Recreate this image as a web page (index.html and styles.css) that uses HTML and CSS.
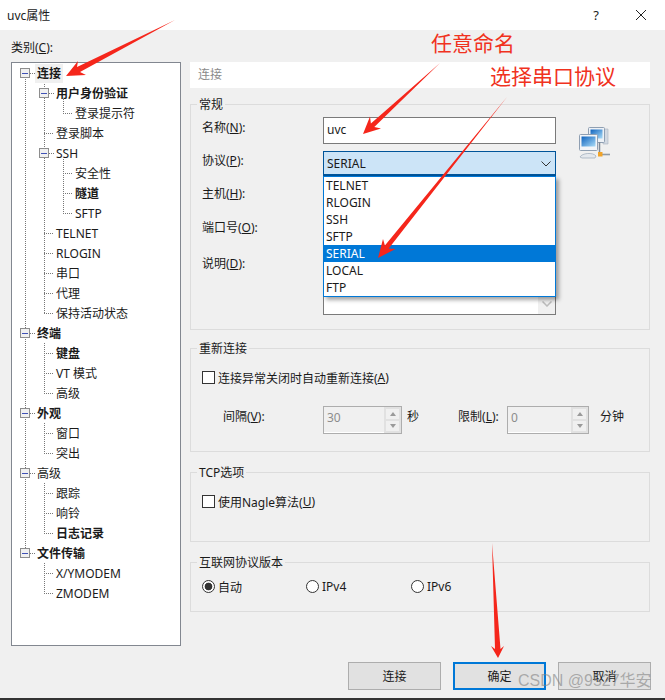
FILE: index.html
```html
<!DOCTYPE html>
<html lang="zh-CN">
<head>
    <meta charset="UTF-8">
    <title>uvc属性</title>
    <link rel="stylesheet" href="styles.css">
</head>
<body>
    <div class="window">
        <header class="titlebar">
            <span class="title">uvc属性</span>
            <span class="help">?</span>
            <svg class="close" width="12" height="12" viewBox="0 0 12 12"><path d="M1 1L11 11M11 1L1 11" stroke="#222" stroke-width="1" fill="none"/></svg>
        </header>

        <div class="content">
            <div class="left">
                <div class="cat-label">类别(<u>C</u>):</div>
                <div class="tree">
                    <svg class="tree-lines" width="168" height="582">
                        <g stroke="#777" stroke-dasharray="1 1" fill="none">
                            <path d="M13.5 16V490M32.5 21V250M51.5 36V50M51.5 96V150M32.5 280V330M32.5 360V390M32.5 420V470M32.5 500V530"/>
                            <path d="M18 10.5H23M18 270.5H23M18 350.5H23M18 410.5H23M18 490.5H23"/>
                            <path d="M37 30.5H42M32 70.5H42M37 90.5H42M32 170.5H42M32 190.5H42M32 210.5H42M32 230.5H42M32 250.5H42"/>
                            <path d="M51 50.5H61M51 110.5H61M51 130.5H61M51 150.5H61"/>
                            <path d="M32 290.5H42M32 310.5H42M32 330.5H42M32 370.5H42M32 390.5H42M32 430.5H42M32 450.5H42M32 470.5H42M32 510.5H42M32 530.5H42"/>
                        </g>
                    </svg>
                    <div class="node lv0"><i class="exp"></i><b class="picked">连接</b></div>
                    <div class="node lv1"><i class="exp"></i><b>用户身份验证</b></div>
                    <div class="node lv2">登录提示符</div>
                    <div class="node lv1">登录脚本</div>
                    <div class="node lv1"><i class="exp"></i>SSH</div>
                    <div class="node lv2">安全性</div>
                    <div class="node lv2"><b>隧道</b></div>
                    <div class="node lv2">SFTP</div>
                    <div class="node lv1">TELNET</div>
                    <div class="node lv1">RLOGIN</div>
                    <div class="node lv1">串口</div>
                    <div class="node lv1">代理</div>
                    <div class="node lv1">保持活动状态</div>
                    <div class="node lv0"><i class="exp"></i><b>终端</b></div>
                    <div class="node lv1"><b>键盘</b></div>
                    <div class="node lv1">VT 模式</div>
                    <div class="node lv1">高级</div>
                    <div class="node lv0"><i class="exp"></i><b>外观</b></div>
                    <div class="node lv1">窗口</div>
                    <div class="node lv1">突出</div>
                    <div class="node lv0"><i class="exp"></i>高级</div>
                    <div class="node lv1">跟踪</div>
                    <div class="node lv1">响铃</div>
                    <div class="node lv1"><b>日志记录</b></div>
                    <div class="node lv0"><i class="exp"></i><b>文件传输</b></div>
                    <div class="node lv1">X/YMODEM</div>
                    <div class="node lv1">ZMODEM</div>
                </div>
            </div>

            <div class="right">
                <div class="page-head">连接</div>

                <fieldset class="group group-general">
                    <legend>常规</legend>
                    <div class="form-grid">
                        <label class="low">名称(<u>N</u>):</label>
                        <div class="input name-input">uvc</div>
                        <svg class="net-icon" width="36" height="36" viewBox="0 0 36 36">
                            <defs>
                                <linearGradient id="scr" x1="0" y1="0" x2="1" y2="1">
                                    <stop offset="0" stop-color="#0f62bd"/>
                                    <stop offset="1" stop-color="#a9dcf8"/>
                                </linearGradient>
                            </defs>
                            <path d="M26 3h5v15h-5z" fill="#d2d9e2" stroke="#aab4c0" stroke-width=".6"/>
                            <rect x="11.5" y="1.5" width="16" height="15" rx="1" fill="#edf1f6" stroke="#8f9fb2"/>
                            <rect x="13.5" y="3.5" width="12" height="9" fill="url(#scr)"/>
                            <path d="M22.5 16v10" stroke="#7f8a97" stroke-width="1.5"/>
                            <rect x="2.5" y="8.5" width="18" height="16" rx="1" fill="#f3f5f8" stroke="#8f9fb2"/>
                            <rect x="4.5" y="10.5" width="14" height="10" fill="url(#scr)"/>
                            <path d="M3 31c2-4 13-5 16-1l-1 2H5z" fill="#e4e8ed" stroke="#9aa8b8" stroke-width=".7"/>
                            <path d="M22 28.5h11" stroke="#8f9aa6" stroke-width="1.6"/>
                            <rect x="21" y="26" width="4.5" height="4.5" fill="#f0a32a"/>
                        </svg>

                        <label>协议(<u>P</u>):</label>
                        <div class="combo-wrap">
                            <div class="combo">SERIAL
                                <svg class="chev" width="10" height="6" viewBox="0 0 10 6"><path d="M.5 .5L5 5L9.5 .5" stroke="#333" fill="none"/></svg>
                            </div>
                            <ul class="drop">
                                <li>TELNET</li>
                                <li>RLOGIN</li>
                                <li>SSH</li>
                                <li>SFTP</li>
                                <li class="sel">SERIAL</li>
                                <li>LOCAL</li>
                                <li>FTP</li>
                            </ul>
                        </div>

                        <label>主机(<u>H</u>):</label>
                        <div class="input"></div>

                        <label>端口号(<u>O</u>):</label>
                        <div class="input"></div>

                        <label class="low">说明(<u>D</u>):</label>
                        <div class="input memo">
                            <div class="memo-bar">
                                <svg width="10" height="6" viewBox="0 0 10 6"><path d="M.5 .5L5 5L9.5 .5" stroke="#bbb" stroke-width="1.5" fill="none"/></svg>
                            </div>
                        </div>
                    </div>
                </fieldset>

                <fieldset class="group group-retry">
                    <legend>重新连接</legend>
                    <div class="check-row"><i class="check"></i>连接异常关闭时自动重新连接(<u>A</u>)</div>
                    <div class="spin-row">
                        <span class="first">间隔(<u>V</u>):</span>
                        <div class="spin"><span class="spin-val">30</span><div class="spin-btns"><i class="up"></i><i class="down"></i></div></div>
                        <span class="unit-sec">秒</span>
                        <span class="second">限制(<u>L</u>):</span>
                        <div class="spin wide"><span class="spin-val">0</span><div class="spin-btns"><i class="up"></i><i class="down"></i></div></div>
                        <span class="unit-min">分钟</span>
                    </div>
                </fieldset>

                <fieldset class="group group-tcp">
                    <legend>TCP选项</legend>
                    <div class="check-row"><i class="check"></i>使用Nagle算法(<u>U</u>)</div>
                </fieldset>

                <fieldset class="group group-ip">
                    <legend>互联网协议版本</legend>
                    <div class="radio-row">
                        <span class="radio-item auto"><i class="radio on"></i>自动</span>
                        <span class="radio-item v4"><i class="radio"></i>IPv4</span>
                        <span class="radio-item"><i class="radio"></i>IPv6</span>
                    </div>
                </fieldset>
            </div>
        </div>

        <footer class="footer">
            <button class="btn">连接</button>
            <button class="btn primary">确定</button>
            <button class="btn">取消</button>
        </footer>

        <!-- annotations pasted on top of the screenshot -->
        <div class="note note-name">任意命名</div>
        <div class="note note-proto">选择串口协议</div>
        <svg class="arrows" width="665" height="700">
            <g fill="#f5261b">
                <polygon points="175,20 80,72 86,75 66,76 78,61 77,67"/>
                <polygon points="440,63 374.3,127 381,128.4 363,134 370,116.6 370.9,123.4"/>
                <polygon points="507,97 388.7,248.5 395.5,249 378,258 383,239 384.9,245.4"/>
                <polygon points="492,543 495,649 491,646 498,658 504,646 500.5,649"/>
            </g>
        </svg>
        <div class="watermark">CSDN @9527华安</div>
    </div>
</body>
</html>
```

FILE: styles.css
```css
* {
    box-sizing: border-box;
}
body {
    margin: 0;
    font-family: "Noto Sans", "Noto Sans CJK SC", sans-serif;
    font-size: 12px;
    color: #1a1a1a;
}
u {
    text-decoration: underline;
}
.window {
    position: relative;
    width: 665px;
    height: 700px;
    background-color: #f0f0f0;
    border-bottom: 2px solid #333;
    display: flex;
    flex-direction: column;
    overflow: hidden;
}

/* title bar */
.titlebar {
    height: 30px;
    flex: none;
    background-color: white;
    display: flex;
    align-items: center;
    padding: 0 18px 0 7px;
}
.title {
    flex: 1;
}
.help {
    font-size: 13px;
    margin-right: 36px;
}

/* main area */
.content {
    flex: 1;
    display: flex;
    padding-left: 11px;
}
.left {
    width: 170px;
    flex: none;
    margin-right: 9px;
}
.cat-label {
    height: 32px;
    line-height: 16px;
    padding-top: 10px;
}

/* tree */
.tree {
    position: relative;
    height: 584px;
    background-color: white;
    border: 1px solid #828790;
}
.tree-lines {
    position: absolute;
    left: 0;
    top: 0;
}
.node {
    position: relative;
    height: 20px;
    display: flex;
    align-items: center;
    white-space: nowrap;
}
.lv0 {
    padding-left: 25px;
}
.lv1 {
    padding-left: 44px;
}
.lv2 {
    padding-left: 63px;
}
.exp {
    position: absolute;
    top: 5px;
    width: 10px;
    height: 10px;
    background: linear-gradient(#3f51b5, #3f51b5) center / 6px 1px no-repeat, #f0f0f0;
    border: 1px solid #8d8d8d;
}
.lv0 .exp {
    left: 8px;
}
.lv1 .exp {
    left: 27px;
}
.picked {
    background-color: #f0f0f0;
    line-height: 19px;
    padding: 0 2px;
    margin-left: -2px;
}

/* right column */
.right {
    width: 460px;
    flex: none;
    padding-top: 32px;
}
.page-head {
    height: 26px;
    line-height: 26px;
    background-color: white;
    color: #8a8a8a;
    padding-left: 8px;
}
.group {
    margin: 11px 0 0;
    padding: 0 0 0 11px;
    border: 1px solid #dcdcdc;
    min-width: 0;
}
.group legend {
    padding: 2px 2px 0;
    margin-left: -5px;
    line-height: 16px;
}
.group-general {
    margin-top: 7px;
    height: 235px;
    padding-top: 4px;
}
.group-retry {
    margin-top: 9px;
    height: 113px;
    padding-top: 14px;
}
.group-tcp {
    height: 79px;
    padding-top: 14px;
}
.group-ip {
    height: 59px;
    padding-top: 9px;
}

/* general form */
.form-grid {
    display: grid;
    grid-template-columns: 121px 233px 36px;
    grid-template-rows: 27px 26px 27px 28px 62px;
    row-gap: 7px;
}
label {
    grid-column: 1;
    line-height: 20px;
}
.low {
    padding-top: 1px;
}
.input {
    background-color: white;
    border: 1px solid #7a7a7a;
    padding: 0 2px;
    line-height: 23px;
    grid-column: 2;
}
.name-input {
    padding-left: 3px;
}
.net-icon {
    grid-column: 3;
    grid-row: 1 / 3;
    margin: 9px 0 0 21px;
}
.combo-wrap {
    position: relative;
    grid-column: 2;
    z-index: 2;
}
.combo {
    height: 25px;
    line-height: 23px;
    padding-left: 3px;
    background-color: #cce4f7;
    border: 1px solid #005499;
    border-bottom-width: 2px;
}
.chev {
    position: absolute;
    right: 5px;
    top: 10px;
}
.drop {
    position: absolute;
    left: 0;
    top: 25px;
    width: 233px;
    height: 121px;
    margin: 0;
    padding: 0;
    list-style: none;
    background-color: white;
    border: 1px solid #0078d7;
    box-shadow: 3px 3px 4px rgba(0, 0, 0, 0.35);
}
.drop li {
    height: 17px;
    line-height: 17px;
    padding-left: 2px;
}
.drop .sel {
    background-color: #0078d7;
    color: white;
}
.memo {
    position: relative;
}
.memo-bar {
    position: absolute;
    right: 0;
    top: 0;
    bottom: 0;
    width: 17px;
    background-color: #f0f0f0;
    display: flex;
    align-items: flex-end;
    justify-content: center;
    padding-bottom: 7px;
}

/* check boxes and radios */
.check-row {
    display: flex;
    align-items: center;
    height: 13px;
}
.check {
    width: 13px;
    height: 13px;
    background-color: white;
    border: 1px solid #333;
    margin-right: 3px;
}
.radio-row {
    display: flex;
    align-items: center;
    height: 13px;
}
.radio-item {
    display: flex;
    align-items: center;
}
.auto {
    width: 104px;
}
.v4 {
    width: 105px;
}
.radio {
    width: 13px;
    height: 13px;
    border: 1px solid #333;
    border-radius: 50%;
    background-color: white;
    margin-right: 3px;
}
.radio.on {
    background: radial-gradient(circle, #333 0, #333 3.5px, white 4.2px);
}

/* spin boxes */
.spin-row {
    display: flex;
    align-items: flex-start;
    margin-top: 22px;
    height: 28px;
    line-height: 22px;
}
.first {
    width: 121px;
    padding-left: 21px;
    flex: none;
}
.second {
    width: 49px;
    margin-left: 39px;
    flex: none;
    white-space: nowrap;
}
.spin {
    width: 79px;
    height: 28px;
    flex: none;
    display: flex;
    justify-content: space-between;
    border: 1px solid #adadad;
    box-shadow: inset 0 -1px 0 white;
    color: #8c8c8c;
}
.spin.wide {
    width: 82px;
}
.spin-val {
    padding-left: 3px;
}
.spin-btns {
    width: 17px;
    background-color: #e1e1e1;
    display: flex;
    flex-direction: column;
    gap: 2px;
    padding: 2px;
}
.spin-btns i {
    flex: 1;
    background-color: #f0f0f0;
    display: flex;
    align-items: center;
    justify-content: center;
}
.spin-btns .up::after {
    content: "";
    border: 3.5px solid transparent;
    border-top: 0;
    border-bottom: 4px solid #9a9a9a;
}
.spin-btns .down::after {
    content: "";
    border: 3.5px solid transparent;
    border-bottom: 0;
    border-top: 4px solid #9a9a9a;
}
.unit-sec {
    margin-left: 5px;
}
.unit-min {
    margin-left: 11px;
}

/* buttons */
.footer {
    flex: none;
    height: 28px;
    margin-bottom: 8px;
    display: flex;
    justify-content: flex-end;
    gap: 12px;
    padding-right: 14px;
}
.btn {
    width: 93px;
    height: 28px;
    font: inherit;
    color: inherit;
    background-color: #e1e1e1;
    border: 1px solid #adadad;
}
.btn.primary {
    border: 2px solid #0078d7;
}

/* annotations */
.note {
    position: absolute;
    color: #f0321e;
    font-size: 21px;
    line-height: 26px;
    white-space: nowrap;
}
.note-name {
    left: 431px;
    top: 30px;
}
.note-proto {
    left: 490px;
    top: 63px;
}
.arrows {
    position: absolute;
    left: 0;
    top: 0;
    z-index: 3;
    pointer-events: none;
}
.watermark {
    position: absolute;
    left: 518px;
    top: 671px;
    z-index: 4;
    font-family: "Liberation Sans", "Noto Sans CJK SC", sans-serif;
    font-size: 16px;
    line-height: 20px;
    color: rgba(130, 130, 130, 0.6);
    white-space: nowrap;
}
```
